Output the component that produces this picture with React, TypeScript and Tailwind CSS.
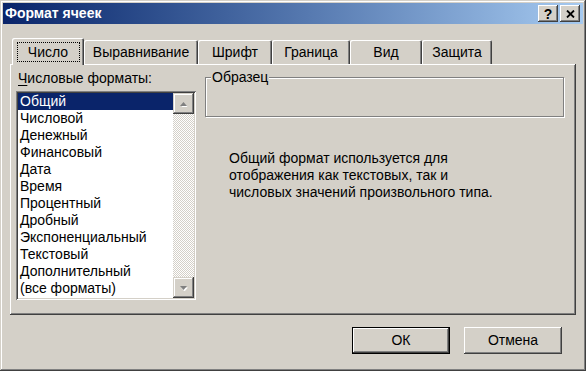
import { ReactNode } from "react";

const formats = [
  "Общий",
  "Числовой",
  "Денежный",
  "Финансовый",
  "Дата",
  "Время",
  "Процентный",
  "Дробный",
  "Экспоненциальный",
  "Текстовый",
  "Дополнительный",
  "(все форматы)",
];

const tabs = [
  { name: "Выравнивание", w: "w-[114px]" },
  { name: "Шрифт", w: "w-[74px]" },
  { name: "Граница", w: "w-[78px]" },
  { name: "Вид", w: "w-[72px]" },
  { name: "Защита", w: "w-[70px]" },
];

const raised =
  "shadow-[inset_-1px_-1px_#404040,inset_1px_1px_#ffffff,inset_-2px_-2px_#808080]";

function CaptionButton({ children }: { children: ReactNode }) {
  return (
    <div
      className={`w-[20px] h-[17px] bg-[#d4d0c8] flex items-center justify-center ${raised}`}>
      {children}
    </div>
  );
}

function ScrollButton({ up }: { up?: boolean }) {
  return (
    <div
      className={`w-[21px] h-[21px] bg-[#d4d0c8] flex items-center justify-center shadow-[inset_-1px_-1px_#404040,inset_1px_1px_#d4d0c8,inset_-2px_-2px_#808080,inset_2px_2px_#ffffff]`}>
      <svg width="9" height="6" viewBox="0 0 9 6">
        {up ? (
          <>
            <polygon points="1,5.5 8,5.5 4.5,1.5" fill="#ffffff" transform="translate(1 1)" />
            <polygon points="1,5 8,5 4.5,1" fill="#808080" />
          </>
        ) : (
          <>
            <polygon points="1,1.5 8,1.5 4.5,5.5" fill="#ffffff" transform="translate(1 1)" />
            <polygon points="1,1 8,1 4.5,5" fill="#808080" />
          </>
        )}
      </svg>
    </div>
  );
}

function Button({ label, isDefault }: { label: string; isDefault?: boolean }) {
  return (
    <div
      className={`w-[98px] h-[27px] bg-[#d4d0c8] flex items-center justify-center ${
        isDefault
          ? "border border-black shadow-[inset_-1px_-1px_#404040,inset_1px_1px_#ffffff,inset_-2px_-2px_#808080]"
          : raised
      }`}>
      {label}
    </div>
  );
}

export default function App() {
  return (
    <div className="w-[586px] h-[371px] bg-[#d4d0c8] p-[3px] flex flex-col text-[14px] leading-[17px] text-black font-['Liberation_Sans',Arial,sans-serif] shadow-[inset_-1px_-1px_#404040,inset_1px_1px_#d4d0c8,inset_-2px_-2px_#808080,inset_2px_2px_#ffffff]">
      {/* title bar */}
      <div className="h-[21px] flex items-center pl-[2px] pr-[3px] bg-gradient-to-r from-[#0a246a] to-[#a6caf0]">
        <span className="font-bold text-white text-[14px]">Формат ячеек</span>
        <div className="ml-auto flex gap-[2px]">
          <CaptionButton>
            <span className="font-bold text-[14px] leading-none">?</span>
          </CaptionButton>
          <CaptionButton>
            <svg width="9" height="8" viewBox="0 0 9 8">
              <path d="M1 0.5 L8 7.5 M8 0.5 L1 7.5" stroke="#000" strokeWidth="1.8" />
            </svg>
          </CaptionButton>
        </div>
      </div>

      {/* tabs */}
      <div className="mt-[14px] ml-[7px] flex flex-col">
        <div className="h-[26px] flex items-start pl-[2px]">
          <div className="relative z-10 w-[72px] h-[27px] bg-[#d4d0c8] rounded-tl-[2px] rounded-tr-[2px] flex justify-center pt-[4px] shadow-[inset_1px_1px_#ffffff,inset_-1px_0_#404040,inset_-2px_0_#808080]">
            <div className="w-[63px] h-[20px] border border-dotted border-black flex items-center justify-center">
              Число
            </div>
          </div>
          {tabs.map((t) => (
            <div
              key={t.name}
              className={`${t.w} h-[24px] mt-[2px] bg-[#d4d0c8] rounded-tl-[2px] rounded-tr-[2px] flex items-center justify-center pt-[1px] shadow-[inset_1px_1px_#ffffff,inset_-1px_0_#404040,inset_-2px_0_#808080]`}>
              {t.name}
            </div>
          ))}
        </div>

        {/* panel */}
        <div className={`w-[566px] h-[251px] bg-[#d4d0c8] flex ${raised}`}>
          <div className="pl-[6px] pt-[6px] flex flex-col">
            <div className="h-[16px] leading-[16px] pl-[2px]">
              <span className="underline underline-offset-2">Ч</span>исловые форматы:
            </div>
            <div className="mt-[5px] w-[180px] h-[209px] p-[2px] bg-white flex shadow-[inset_1px_1px_#808080,inset_-1px_-1px_#ffffff,inset_2px_2px_#404040,inset_-2px_-2px_#d4d0c8]">
              <div className="flex-1 flex flex-col">
                {formats.map((f, i) => (
                  <div
                    key={f}
                    className={`h-[17px] pl-[2px] whitespace-nowrap ${
                      i === 0 ? "bg-[#0a246a] text-white" : ""
                    }`}>
                    {f}
                  </div>
                ))}
              </div>
              <div className="w-[21px] flex flex-col">
                <ScrollButton up />
                <div className="flex-1 bg-[repeating-conic-gradient(#d4d0c8_0_25%,#ffffff_0_50%)] bg-[length:2px_2px]" />
                <ScrollButton />
              </div>
            </div>
          </div>

          <div className="ml-[9px] pt-[13px] flex flex-col">
            <div className="relative w-[359px] h-[40px] border border-[#808080] shadow-[1px_1px_#ffffff,inset_1px_1px_#ffffff]">
              <span className="absolute -top-[9px] left-[5px] px-[1px] bg-[#d4d0c8] leading-[17px]">
                Образец
              </span>
            </div>
            <div className="mt-[33px] pl-[24px] leading-[17px]">
              <p>Общий формат используется для</p>
              <p>отображения как текстовых, так и</p>
              <p>числовых значений произвольного типа.</p>
            </div>
          </div>
        </div>
      </div>

      {/* buttons */}
      <div className="mt-[12px] flex justify-end gap-[14px] pr-[21px]">
        <Button label="ОК" isDefault />
        <Button label="Отмена" />
      </div>
    </div>
  );
}
